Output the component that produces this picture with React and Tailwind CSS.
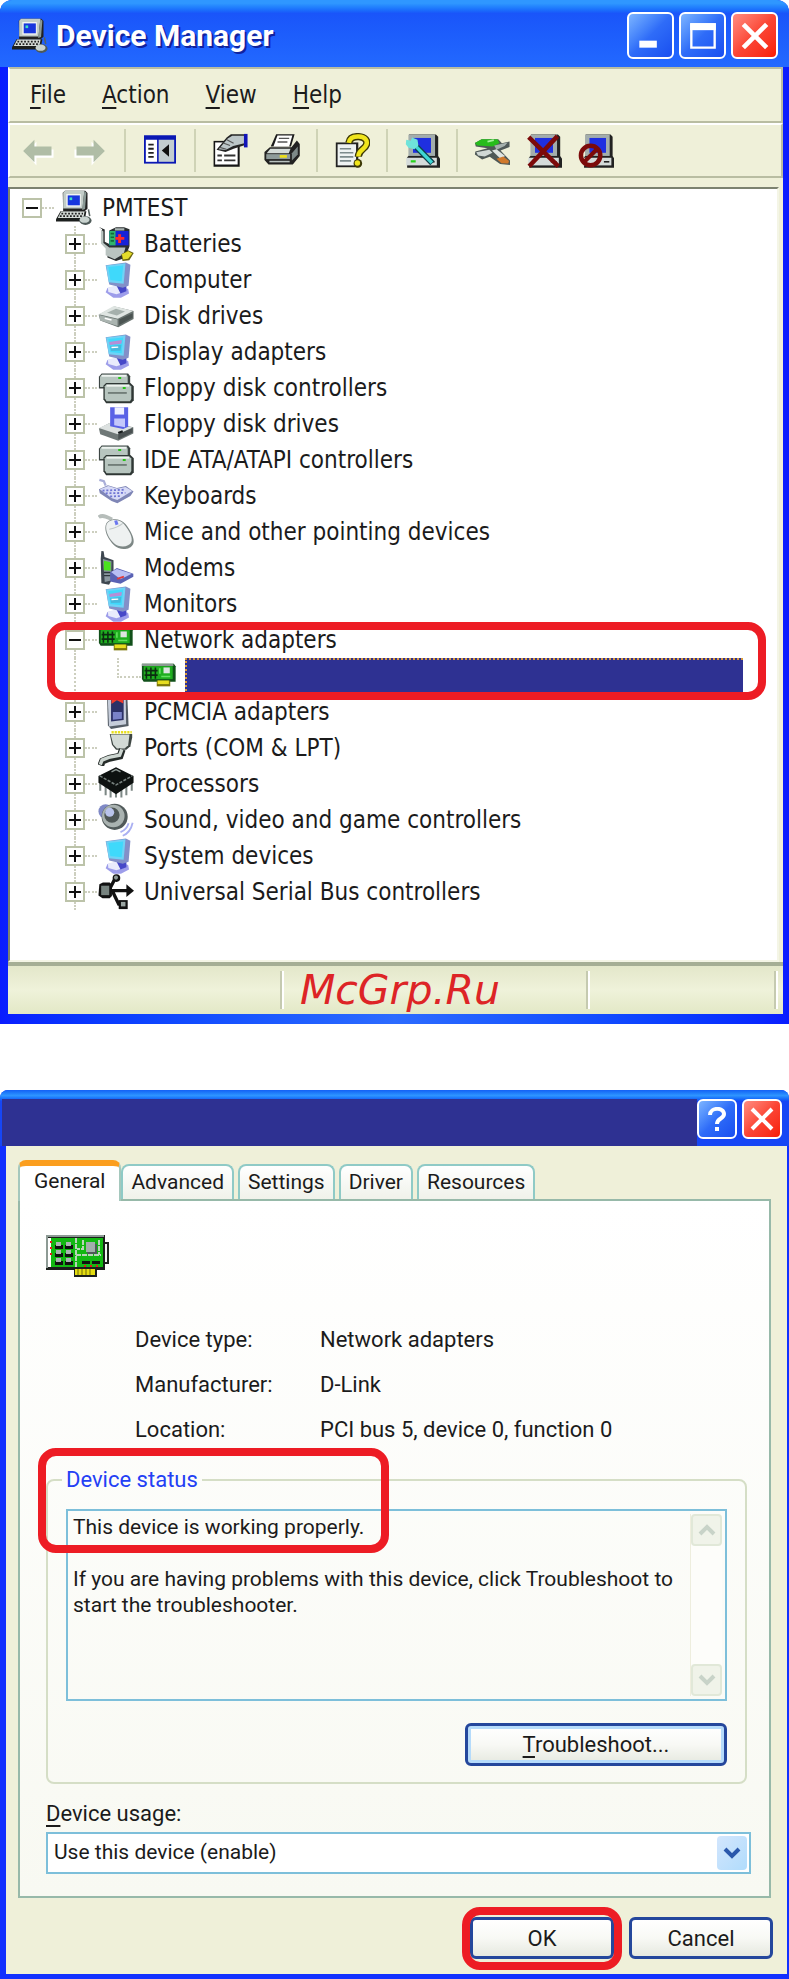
import React, { useState } from "react";

// Small drawings for the tree and the toolbar, all on a 16 x 16 grid
const Icon = ({ children, className = "h-9 w-9" }) => (
  <svg viewBox="0 0 16 16" className={`shrink-0 ${className}`} aria-hidden="true">
    {children}
  </svg>
);

const PcIcon = ({ className }) => (
  <Icon className={className}>
    <path d="M4 .3h9l1 1v7l-1.4 1.2H3.2L3 1.2z" fill="#222" />
    <path d="M4 .3h8.6l-.8 7.9H3.2V1.2z" fill="#c3cdc8" />
    <path d="M12.6.4l.9.8-.6 7.2-1.3.5z" fill="#8b9a96" />
    <path d="M4.6 1.8h6.4v5.6H4.6z" fill="#f4f6f4" />
    <path d="M5.2 2.4h5.4v4.4H5.2z" fill="#1836dd" />
    <path d="M6 3.3h1.2v1.2H6z" fill="#3fe0c0" />
    <path d="M2 9.4h11.5l-.8 4.6H0v-1z" fill="#1c1f1e" />
    <path d="M2.3 9.6h10.4l-.5 2.8H.8z" fill="#d6dcd8" />
    <path d="M2.4 10.5h9.6M1.7 11.6h9.9" stroke="#222" strokeWidth=".8" strokeDasharray=".8 .7" />
    <ellipse cx="13.1" cy="13.6" rx="2.7" ry="1.9" fill="#4e5a58" />
    <ellipse cx="12.7" cy="13.2" rx="2.2" ry="1.4" fill="#c9d3cf" />
    <path d="M14.4 8.6l.6 3" stroke="#56625f" strokeWidth=".7" />
  </Icon>
);

const BatteryIcon = () => (
  <Icon>
    <path d="M.4.4l1.4 1v6l2.4 2V14L8 15.5l4-1.3L14 9V1.4L11.6.6H8L5 2v6L3 7V1.6z" fill="#2b2f30" />
    <path d="M.5 1l.8.8v6L3.4 10v3l4 1.8 4-2.4.8-2.9H5L2.4 7.6V2.4z" fill="#b9c3c0" />
    <path d="M5 2.2h8.6v6.4H5z" fill="#1722d8" />
    <path d="M5 2.2h2.8v6.4H5z" fill="#2fb46a" />
    <path d="M5.6 3.4h1.5M5.6 5h1.5M5.6 6.6h1.5" stroke="#136b3a" strokeWidth=".7" />
    <path d="M9.6 3.7v3.8M7.7 5.5h4" stroke="#ff2a2a" strokeWidth="1.3" />
    <path d="M7.5 1h4.2v1H7.5z" fill="#aab4b2" />
    <path d="M10.4 12.6l3-1.8 2.5 1.2-2 3.2-3 .3z" fill="#6a6410" />
    <path d="M10.6 12.6l2.8-1.4 1.8 1-1.8 2.4-2.2.3z" fill="#e4dc2a" />
  </Icon>
);

const MonitorIcon = ({ display }) => (
  <Icon>
    <path d="M4.2 11.6l5.2-1 4 1.4.4 2-3.6 1.9H6.8L3.4 13.4z" fill="#9d9dea" />
    <path d="M4.4 11.4l3.4-1 3.8.9-.4 2-3 1-3.6-1z" fill="#e9ebfc" />
    <path d="M8 10h4.6v3L10 14z" fill="#4648c8" />
    <path d="M3.4 1.4l9-1.2 2 1-.8 9.4-2.6.8-6-1.4z" fill="#8390c8" />
    <path d="M3.6 1.5l8.6-1-.8 9.2-6.6-.7z" fill="#6fd3f6" />
    <path d="M4.6 2.2l6.6-.7-.7 7-5-.5z" fill="#3fd9fb" />
    {display && (
      <>
        <path d="M5 3.5l5.6-.8-.2 1.6-5.2.6z" fill="#b68ed6" />
        <path d="M5.4 5.4l5-.6-.4 2.6-4.2.2z" fill="#49b7dc" />
        <path d="M6 6l3-.2" stroke="#fff" strokeWidth=".6" />
      </>
    )}
  </Icon>
);

const DiskIcon = () => (
  <Icon>
    <path d="M.3 7.4l7-3.6 8.5 2v3.5L9 13 1 10z" fill="#68726f" />
    <path d="M.3 7.2L7 3.6l8.6 2.2-6.8 3.4z" fill="#dfe5e2" />
    <path d="M4 6.6l4-1.8 4 1.2-3.6 1.8z" fill="#a5b0ac" />
    <path d="M.5 7.6l8.2 2v2.8L1 10z" fill="#aab4b0" />
    <path d="M9.4 9.6l6-2.8v2L9.4 12z" fill="#4b5452" />
    <path d="M3 9l3 .8" stroke="#fff" strokeWidth=".7" />
  </Icon>
);

const ControllerIcon = () => (
  <Icon>
    <path d="M1.6 1.6h11.8l.9 1.2v5.4H.4V3z" fill="#3d4644" />
    <path d="M1.8 2h11l.4 1v4.6H.9V3z" fill="#b7c5bf" />
    <path d="M1.6 2.6h11" stroke="#eef3f0" strokeWidth=".8" />
    <path d="M3.6 5.8h10.8l1.5 1.4v6.2l-1.2 1.4H3.6L2.4 13V7z" fill="#2f3735" />
    <path d="M3.8 6.3h10l1 1v5.6l-.6 1H3.8L3 12.6V7.2z" fill="#b7c5bf" />
    <path d="M3.8 7h10" stroke="#eef3f0" strokeWidth=".8" />
    <path d="M4.4 10.2h8.4" stroke="#56625e" strokeWidth=".6" />
    <path d="M9 3.6h1.3M11 8h1.3" stroke="#25c316" strokeWidth=".9" />
  </Icon>
);

const FloppyIcon = () => (
  <Icon>
    <path d="M.4 10l5-2.6 10.3 2v2.8L9 15.4 1 12.6z" fill="#6f7877" />
    <path d="M.4 9.8l5-2.4 10 2.2-6.6 3z" fill="#dce1e0" />
    <path d="M9 12.6l6.4-2.8v2L9 14.9z" fill="#4a5152" />
    <path d="M5.4.6h8v8.6l-2.2 1L5.4 9z" fill="#5a62e6" />
    <path d="M7.4.6h4.2v3.2H7.4z" fill="#eef0ff" />
    <path d="M7.2 5.6H12v3.8l-4.8-.8z" fill="#c4c8fb" />
    <path d="M9 12l2-.8" stroke="#14191a" strokeWidth="1" />
  </Icon>
);

const KeyboardIcon = () => (
  <Icon>
    <path d="M.6.8l2 .6.8 2" stroke="#a9aed8" strokeWidth="1" fill="none" />
    <path d="M.4 5l4-1.8 4 1.2 4-.8 3.4 2.4-1.4 2-5.8 3.2L6 10.2.8 6.8z" fill="#7f86b6" />
    <path d="M.8 5l3.8-1.4 4 1.2 3.6-.8 3 1.8-6.6 4L6.2 9z" fill="#d7daf6" />
    <path d="M2 5.6l10-.4M3.4 6.8l8.8-.2M5.4 8.2l4.8-.2" stroke="#7076d4" strokeWidth=".8" strokeDasharray=".9 .8" />
  </Icon>
);

const MouseIcon = () => (
  <Icon>
    <path d="M.3 1.4c2-1.4 4 .2 6 1" stroke="#b6bdba" strokeWidth="1.6" fill="none" />
    <path d="M3.4 5C4 1.800 9.600 1.200 12.200 4.400c2.400 3 4.400 6.600 3.400 9-1.200 2.600-6 3-8.600.4C4.400 11 2.800 8 3.400 5z" fill="#7d8785" />
    <path d="M3.700 5C4.400 2.400 9.200 1.700 11.600 4.600c2.400 2.900 4 6 3.200 8-1 2.200-5.400 2.600-7.700.4C4.800 10.800 3.200 7.600 3.700 5z" fill="#eef1f1" />
    <path d="M5 6.800c2-.4 4.400-1.200 6-2.600" stroke="#c1c8c8" strokeWidth=".5" fill="none" />
    <path d="M7.200 3l1.300-.2.600 1.800-1.300.4z" fill="#6b77ef" />
  </Icon>
);

const ModemIcon = () => (
  <Icon>
    <path d="M1.500.4l1 .2.400 2.500 4 1.400V12l-2 3.400-3.400-.6L1.200 4z" fill="#3e4750" />
    <path d="M2.200 4l3.800 1-.2 8.600-2.800.6z" fill="#8b98a0" />
    <path d="M2.600 4.800l3 .6v3.800l-3-.2z" fill="#4be31e" />
    <path d="M2.600 10h3M2.600 11.400h3" stroke="#2e363c" strokeWidth=".6" />
    <path d="M5.400 10l3-2 7.300 2.600v1.300L10 15l-4.600-1z" fill="#5a62b4" />
    <path d="M5.800 9.800L8.400 8.400l6.600 2.200-5 2.400z" fill="#b9bff4" />
    <path d="M8.500 12.800l3-1" stroke="#e23b3b" strokeWidth=".8" />
  </Icon>
);

const NicIcon = () => (
  <Icon>
    <path d="M.4 2.500h14.200l.8 1.200v6.800H1.200L.4 9.300z" fill="#11501a" />
    <path d="M.4 2.500h14v1H.4z" fill="#8b9a93" />
    <path d="M1.200 3.600h12.900v5.800H1.200z" fill="#1fae1f" />
    <path d="M2.400 4.200v5M4.400 4.200v5M6.400 4.200v5M1.600 5.600h5.800M1.600 7.600h5.800" stroke="#0b2d10" strokeWidth=".7" />
    <path d="M10 4.200h2.800v2.600H10z" fill="#dde4e0" />
    <path d="M8.400 4.600v2.400M9 8.200h4" stroke="#64e060" strokeWidth=".7" />
    <path d="M7 10h6v2.600H7z" fill="#7d7708" />
    <path d="M7.400 10h5v1.600h-5z" fill="#e7dd1f" />
  </Icon>
);

const PcmciaIcon = () => (
  <Icon>
    <path d="M4 .6l9-.4.600 14-7.800 1.400L4.400 14z" fill="#555d66" />
    <path d="M4.300 1l8-.4.200 12.800-7.600 1z" fill="#c6cdda" />
    <path d="M5.800 2.400h5.600v9.200l-5.600.6z" fill="#2c3166" />
    <path d="M6 2.200h5.200v2L8.400 2.800 6 4.400z" fill="#f23a2a" />
    <path d="M6.600 8h4v3l-4 .4z" fill="#7a83c8" />
  </Icon>
);

const PortIcon = () => (
  <Icon>
    <path d="M6 1h9" stroke="#e8df20" strokeWidth="1.200" strokeDasharray="1 .4" />
    <path d="M5.200 1.800h10v1.400l-.8 4-1.800 1.600H8L6.200 6.600z" fill="#3f4744" />
    <path d="M5.600 2h8.400l-.6 4.800-1.600 1.400H8.400L6.800 6.400z" fill="#d3dad6" />
    <path d="M10.800 8.600l-1 3-4.800 1-3 1.200-.8 2" stroke="#252b29" strokeWidth="3" fill="none" />
    <path d="M10.600 8.600l-1 2.600-4.800 1-3 1.200-.8 2" stroke="#cdd6d1" strokeWidth="1.500" fill="none" />
  </Icon>
);

const CpuIcon = () => (
  <Icon>
    <path d="M1 6v5M3.400 8v5M5.600 9v5M8 10v4M10.400 9v5M12.600 8v5M15 6v5" stroke="#7d8885" strokeWidth=".9" />
    <path d="M.2 4.400L8 .6l7.800 3.800v3L8 12.600.2 7.400z" fill="#0d1110" />
    <path d="M.8 4.400l7.200 4 7.200-4" stroke="#77817e" strokeWidth=".7" fill="none" strokeDasharray="1.400 .6" />
    <path d="M6 2.600l2-1 2 1" stroke="#8d9794" strokeWidth=".6" fill="none" />
  </Icon>
);

const SoundIcon = () => (
  <Icon>
    <circle cx="3.400" cy="4.200" r="3.200" fill="#7f89c6" />
    <circle cx="7.400" cy="6.600" r="5.800" fill="#515a5a" />
    <circle cx="6.800" cy="6.200" r="5" fill="#a9b2b0" />
    <circle cx="6.200" cy="5.800" r="3.400" fill="#4e5655" />
    <circle cx="5.200" cy="4.600" r="2" fill="#b9c3ea" />
    <path d="M10 13.400c2-.8 3-2 3.600-4M11 15c2.400-1 3.800-3 4.400-5.800" stroke="#aab0f2" strokeWidth=".8" fill="none" />
  </Icon>
);

const UsbIcon = () => (
  <Icon>
    <path d="M4 7.400h9M5 7l2.600-5M6.600 8l2.600 5.400h2" stroke="#111" strokeWidth="1.500" fill="none" />
    <path d="M12.600 4.600L16 7.400l-3.400 2.800z" fill="#111" />
    <path d="M.6 4.600l1.600-.8h3l1 1v5l-1 1H2L.2 9.600z" fill="#111" />
    <path d="M1.400 5.200h3.600v4.200H1.400z" fill="#77837f" />
    <circle cx="8.200" cy="1.800" r="1.700" fill="#111" />
    <circle cx="8" cy="1.600" r=".9" fill="#8d9996" />
    <path d="M9.200 11.600h4v4h-4z" fill="#111" />
    <path d="M10.200 12.400h2v2h-2z" fill="#9aa5a2" />
  </Icon>
);

const ArrowIcon = ({ forward }) => (
  <Icon>
    <g transform={forward ? "translate(16 0) scale(-1 1)" : undefined}>
      <path d="M2.300 8.700L7.300 3.900v3.400h7.600v3.700H7.300v3.400z" fill="#fff" />
      <path d="M1.400 8l5-5v3h7.600v4H6.400v3z" fill="#b0bda6" />
    </g>
  </Icon>
);

const PaneIcon = () => (
  <Icon>
    <path d="M.900 1h14.200v12.600H.9z" fill="#0a18b4" />
    <path d="M1.700 3h5v9.800h-5z" fill="#fff" />
    <path d="M7.400 3h6.900v9.800H7.400z" fill="#c3cdd0" />
    <path d="M2.800 5.200h2.400M2.800 7h2.400M2.800 8.800h2.400M2.800 10.600h2.400" stroke="#222" strokeWidth=".8" />
    <path d="M12 5v5.600L8.800 7.800z" fill="#111" />
  </Icon>
);

const PropertiesIcon = () => (
  <Icon>
    <path d="M.7 3.500h11.600V15H.7z" fill="#151515" />
    <path d="M1.400 4.200h10V14h-10z" fill="#fff" />
    <path d="M2.400 10h2M5.400 10h5M2.400 12.200h2M5.400 12.200h5" stroke="#333" strokeWidth=".8" />
    <path d="M2 7.400L6.500 2 8.400.600h6v4.800L9.600 7 6 8.400z" fill="#252525" />
    <path d="M3 7.200L7 2.400l2-1.200h5.400v3.400l-5 1.200L6 7.600z" fill="#bcc6c8" />
    <path d="M3.400 6.400l3 .8M5 4.400l3 1.200M6.600 3l3 1.600" stroke="#555" strokeWidth=".5" />
    <path d="M14.200.4h1.600v6h-1.600z" fill="#1114b8" />
  </Icon>
);

const PrinterIcon = () => (
  <Icon>
    <path d="M5.400.500h8.200L12 6H3z" fill="#1a1a1a" />
    <path d="M6 1.100h6.600L11.200 6H4.200z" fill="#fff" />
    <path d="M6.600 2.400h4.600M6 4h4.400" stroke="#555" strokeWidth=".6" />
    <path d="M2.600 6.300h9.600l2.400-3 1.300 1.600v5.300L12.800 14H2L.2 12V8.400z" fill="#222" />
    <path d="M2.800 7h9L11 9H1.200z" fill="#d4dcd8" />
    <path d="M1 9.400h10.600v2.200H1z" fill="#8e9b9a" />
    <path d="M12.400 9l2.600-3v3.600l-2.600 2.600z" fill="#7d8988" />
    <path d="M7 9.800h3.200v1.200H7z" fill="#ecdf1b" />
    <path d="M2.400 12.700h9" stroke="#b9c2c0" strokeWidth=".7" />
  </Icon>
);

const HelpIcon = () => (
  <Icon>
    <path d="M.8 4.200h10v11H.8z" fill="#222" />
    <path d="M1.600 5h8.200v9.400H1.600z" fill="#eef2f2" />
    <path d="M2.600 7h5M2.600 8.800h6M2.600 10.600h6M2.600 12.400h5" stroke="#7c8a8c" strokeWidth=".7" />
    <path d="M6.600 4.400C7 1.900 9 1.500 11 1.600c3 .2 4 1.800 3.400 3.600-.6 2-3.600 2.400-3.600 5.400" stroke="#3c3806" strokeWidth="3.200" fill="none" />
    <path d="M6.600 4.400C7 1.900 9 1.500 11 1.600c3 .2 4 1.800 3.400 3.600-.6 2-3.600 2.400-3.600 5.200" stroke="#f0e51c" strokeWidth="2" fill="none" />
    <circle cx="10.600" cy="13.500" r="1.900" fill="#3c3806" />
    <circle cx="10.400" cy="13.300" r="1.200" fill="#f0e51c" />
  </Icon>
);

// The grey computer that three of the toolbar buttons share
const BasePc = () => (
  <>
    <path d="M2.200.700h12l1 1v8.500l.8 1.200v4H1.400v-4.600l.8-.8z" fill="#222" />
    <path d="M2 .7h11.800v9.500H2z" fill="#a3adac" />
    <path d="M4 2.200h8v6.600H4z" fill="#1f2fe0" />
    <path d="M1 11h13.600v3.400H1z" fill="#d5dbda" />
    <path d="M11 12.800h2.600" stroke="#222" strokeWidth=".7" />
  </>
);

const ScanIcon = () => (
  <Icon>
    <BasePc />
    <path d="M4 4.600l8.600 8.800" stroke="#0c3f4c" strokeWidth="2.600" />
    <path d="M4 4.600l8.400 8.600" stroke="#3fd6d4" strokeWidth="1.500" />
    <path d="M1 3l2 .4L3.600 2l2.400 1 .4 2.600L4.600 7.200 2 6.600.8 5z" fill="#6fe3da" />
    <path d="M3 12.600h2.200" stroke="#27d31c" strokeWidth="1" />
  </Icon>
);

const UpdateIcon = () => (
  <Icon>
    <path d="M.4 4.400l3-1.600h7.400l1.600 1.800 3.400-.8v2.400l-4 1.600 4.200 4.400v2l-4.400-.4-4.600-3.200-3.400 1.200L.4 9.600l.2-1.400L6 6.800.8 6z" fill="#4f5957" />
    <path d="M.4 4.400l3-1.600h7l1 1.600-3 1.600-7-.4z" fill="#27bc1c" />
    <path d="M6 3.800l2.800-.6" stroke="#a5f29b" strokeWidth=".8" />
    <path d="M9 5.600l6-1.400-1.400 1.600L10 7.400z" fill="#a6b1ae" />
    <path d="M1 8.600l5.800-1.200 1.400 1.400-3.400 1.600-3-.4z" fill="#d0d8d5" />
    <path d="M8 7.800l2-.6 3.800 3-2 1.200z" fill="#dfe5e2" />
    <path d="M10 11.400l3-1 2.600 2-.4 1.200-3-.2z" fill="#d0792c" />
  </Icon>
);

const UninstallIcon = () => (
  <Icon>
    <BasePc />
    <path d="M1.200 1.800l13.200 13M14 1.400L1.400 14.800" stroke="#7c0a0a" strokeWidth="2" />
  </Icon>
);

const DisableIcon = () => (
  <Icon>
    <g transform="translate(1.400 0) scale(.92 1)">
      <BasePc />
    </g>
    <circle cx="5.600" cy="10" r="4.300" fill="none" stroke="#7c0a0a" strokeWidth="2" />
    <path d="M8.600 7l-6 6" stroke="#7c0a0a" strokeWidth="1.800" />
  </Icon>
);

const BigCard = () => (
  <svg viewBox="0 0 63 42" className="h-[42px] w-[63px]" aria-hidden="true">
    <path d="M0 0h59v7h4v22h-4v6h-8v7H28v-7H0z" fill="#1b1f1c" />
    <path d="M59 9h2v18h-2z" fill="#f3f5f3" />
    <path d="M0 0h58v2H2v31H0z" fill="#8d9a94" />
    <path d="M2 3h3v29H2z" fill="#fff" />
    <path d="M5 3h52v29H5z" fill="#12b812" />
    <path d="M5 6v2M5 12v2M5 18v2" stroke="#e01c1c" strokeWidth="2" />
    <path d="M30 3v29M30 20h25M37 5v9h-6M53 5v15" stroke="#b9d4b9" strokeWidth="2" strokeDasharray="5 1" fill="none" />
    <path d="M9 10h8v4H9zM19 10h8v4h-8zM9 18h8v4H9zM19 18h8v4h-8zM9 26h8v4H9zM19 26h8v4h-8zM36 26h8v3h-8zM46 26h8v3h-8z" fill="#101310" />
    <path d="M10 7h5v4h-5zM20 7h5v4h-5zM10 15h5v4h-5zM20 15h5v4h-5zM10 23h5v4h-5zM20 23h5v4h-5z" fill="#aab4b2" />
    <path d="M41 9h10v10H41z" fill="#4f5a58" />
    <path d="M40 7h9v10h-9z" fill="#a3aeac" />
    <path d="M38 31h2M44 31h2M50 31h2" stroke="#e01c1c" strokeWidth="2" />
    <path d="M29 34h20v6H29z" fill="#e3dc10" />
    <path d="M32 34v6M36 34v6M40 34v6M44 34v6" stroke="#6e6a08" strokeWidth="1" />
  </svg>
);

const devices = [
  { name: "Batteries", icon: <BatteryIcon /> },
  { name: "Computer", icon: <MonitorIcon /> },
  { name: "Disk drives", icon: <DiskIcon /> },
  { name: "Display adapters", icon: <MonitorIcon display /> },
  { name: "Floppy disk controllers", icon: <ControllerIcon /> },
  { name: "Floppy disk drives", icon: <FloppyIcon /> },
  { name: "IDE ATA/ATAPI controllers", icon: <ControllerIcon /> },
  { name: "Keyboards", icon: <KeyboardIcon /> },
  { name: "Mice and other pointing devices", icon: <MouseIcon /> },
  { name: "Modems", icon: <ModemIcon /> },
  { name: "Monitors", icon: <MonitorIcon display /> },
  { name: "Network adapters", icon: <NicIcon />, open: true },
  { name: "PCMCIA adapters", icon: <PcmciaIcon /> },
  { name: "Ports (COM & LPT)", icon: <PortIcon /> },
  { name: "Processors", icon: <CpuIcon /> },
  { name: "Sound, video and game controllers", icon: <SoundIcon /> },
  { name: "System devices", icon: <MonitorIcon /> },
  { name: "Universal Serial Bus controllers", icon: <UsbIcon /> },
];

const menus = ["File", "Action", "View", "Help"];

const tools = [
  [
    { label: "Back", icon: <ArrowIcon /> },
    { label: "Forward", icon: <ArrowIcon forward /> },
  ],
  [{ label: "Show console tree", icon: <PaneIcon /> }],
  [
    { label: "Properties", icon: <PropertiesIcon /> },
    { label: "Print", icon: <PrinterIcon /> },
  ],
  [{ label: "Help", icon: <HelpIcon /> }],
  [{ label: "Scan for hardware changes", icon: <ScanIcon /> }],
  [
    { label: "Update driver", icon: <UpdateIcon /> },
    { label: "Uninstall", icon: <UninstallIcon /> },
    { label: "Disable", icon: <DisableIcon /> },
  ],
];

const tabs = ["General", "Advanced", "Settings", "Driver", "Resources"];

const details = [
  ["Device type:", "Network adapters"],
  ["Manufacturer:", "D-Link"],
  ["Location:", "PCI bus 5, device 0, function 0"],
];

const CaptionButton = ({ label, red, small, children }) => (
  <button
    type="button"
    aria-label={label}
    className={`flex items-center justify-center rounded-md border-2 border-white bg-linear-to-br ${
      red ? "from-[#ff8a80] via-[#fb4534] to-[#f81c00]" : "from-[#7db4ff] via-[#2f6cf8] to-[#1a4ef0]"
    } ${small ? "h-10 w-10" : "h-[47px] w-[47px]"}`}
  >
    <svg viewBox="0 0 24 24" className={small ? "h-6 w-6" : "h-7 w-7"} fill="none" aria-hidden="true">
      {children}
    </svg>
  </button>
);

const CloseMark = () => <path d="M2 2l20 20M22 2L2 22" stroke="#fff" strokeWidth="4" />;

const Expander = ({ open, name }) => (
  <button
    type="button"
    aria-label={`${open ? "Collapse" : "Expand"} ${name}`}
    className="flex h-5 w-5 shrink-0 items-center justify-center border-2 border-[#bcc3a9] bg-white"
  >
    <svg viewBox="0 0 12 12" className="h-3 w-3" aria-hidden="true">
      <path d={open ? "M0 6h12" : "M0 6h12M6 0v12"} stroke="#111" strokeWidth="2" />
    </svg>
  </button>
);

const Dots = ({ className }) => <span className={`shrink-0 border-dotted border-[#cdcfbf] ${className}`} />;

const DeviceRow = ({ name, icon, open }) => (
  <div className="flex h-9 items-center">
    <div className="flex h-full w-5 flex-col items-center">
      <Dots className="h-2 border-l-2" />
      <Expander open={open} name={name} />
      <Dots className="h-2 border-l-2" />
    </div>
    <Dots className="mr-px w-3 border-t-2" />
    {icon}
    <span className="ml-[10px] whitespace-nowrap">{name}</span>
  </div>
);

const Underlined = ({ children }) => (
  <>
    <span className="underline decoration-2 underline-offset-4">{children[0]}</span>
    {children.slice(1)}
  </>
);

const DeviceManager = () => (
  <section
    aria-label="Device Manager"
    className="rounded-t-xl bg-[#1f3cff] bg-linear-to-r from-[#0a1cff] via-[#2c6bff] to-[#0a1cff] pr-[6px] pb-[10px] pl-2 font-['DejaVu_Sans_Condensed','DejaVu_Sans',sans-serif] text-[24px] text-[#1b1b1b]"
  >
    <header className="-mr-[6px] -ml-2 flex h-[67px] items-center rounded-t-xl bg-linear-to-b from-[#2f97ff] from-5% via-[#1a55fa] via-20% to-[#2369ff] pr-[11px] pl-3 pt-1">
      <PcIcon className="h-9 w-9" />
      <h1 className="ml-2 flex-1 font-['Roboto',sans-serif] text-[30px] font-bold whitespace-nowrap text-white [text-shadow:2px_2px_0_#10239e]">
        Device Manager
      </h1>
      <div className="flex gap-[5px]">
        <CaptionButton label="Minimize">
          <path d="M2 19h15" stroke="#fff" strokeWidth="6" />
        </CaptionButton>
        <CaptionButton label="Maximize">
          <path d="M2 2h20v20H2z" stroke="#fff" strokeWidth="2" />
          <path d="M1 4h22" stroke="#fff" strokeWidth="6" />
        </CaptionButton>
        <CaptionButton label="Close" red>
          <CloseMark />
        </CaptionButton>
      </div>
    </header>

    <div className="bg-[#eff0d9]">
      <nav className="flex h-14 items-center gap-9 border-2 border-t-[#b9bda2] border-r-[#b9bda2] border-b-[#b9bda2] border-l-white pl-5">
        {menus.map((menu) => (
          <button type="button" key={menu}>
            <Underlined>{menu}</Underlined>
          </button>
        ))}
      </nav>
      <div className="flex h-[55px] items-center gap-4 border-2 border-t-white border-r-[#b9bda2] border-b-[#b9bda2] border-l-white pl-[10px]">
        {tools.map((group, i) => (
          <React.Fragment key={i}>
            {i > 0 && <span className="h-[43px] w-[2px] bg-[#cfd3b6]" />}
            {group.map((tool) => (
              <button type="button" key={tool.label} aria-label={tool.label}>
                {tool.icon}
              </button>
            ))}
          </React.Fragment>
        ))}
      </div>

      <main className="mt-[9px] mr-1 border-2 border-t-[#7c8270] border-r-[#f4f5e6] border-b-[#f4f5e6] border-l-[#7c8270] bg-white pt-px pb-[50px]">
        <div className="flex h-9 items-center pl-3">
          <Expander open name="PMTEST" />
          <Dots className="mr-[2px] w-3 border-t-2" />
          <PcIcon />
          <span className="ml-[10px]">PMTEST</span>
        </div>
        <ul className="pl-[55px]">
          {devices.map((device) =>
            device.open ? (
              <li key={device.name} className="relative">
                <DeviceRow {...device} />
                <div className="flex h-9 pl-[9px]">
                  <Dots className="border-l-2" />
                  <Dots className="ml-[41px] h-5 w-6 border-b-2 border-l-2" />
                  <NicIcon />
                  <span className="mr-[34px] ml-2 flex-1 border-t-2 border-l-2 border-dotted border-[#d99a3c] bg-[#2e3192]" />
                </div>
                <span className="pointer-events-none absolute top-0 right-[11px] -bottom-[6px] -left-[18px] rounded-[18px] border-8 border-[#ed1c24]" />
              </li>
            ) : (
              <li key={device.name}>
                <DeviceRow {...device} />
              </li>
            )
          )}
        </ul>
      </main>

      <footer className="flex h-[52px] items-center border-t-4 border-[#a5ae95] bg-linear-to-b from-[#e3e7ca] via-[#eff2da] to-[#e3e8c6] pr-[5px]">
        <span className="flex-[277]" />
        <span className="h-[38px] w-1 border-r-2 border-l-2 border-l-[#c5cab0] border-r-white" />
        <span className="flex-[292] pl-4 font-['DejaVu_Sans',sans-serif] text-[41px] leading-none whitespace-nowrap text-[#dd2426] italic">
          McGrp.Ru
        </span>
        <span className="h-[38px] w-1 border-r-2 border-l-2 border-l-[#c5cab0] border-r-white" />
        <span className="flex-[187]" />
        <span className="h-[38px] w-1 border-r-2 border-l-2 border-l-[#c5cab0] border-r-white" />
      </footer>
    </div>
  </section>
);

const xpButton =
  "rounded-md border-[3px] border-[#24479c] bg-linear-to-b from-white via-[#f8f9f5] to-[#e6e9e0] text-center";

const Chevron = ({ down, color }) => (
  <svg viewBox="0 0 18 12" className="h-3 w-[18px]" fill="none" aria-hidden="true">
    <path d={down ? "M2 2l7 7 7-7" : "M2 10l7-7 7 7"} stroke={color} strokeWidth="4" />
  </svg>
);

const AdapterProperties = () => {
  const [usage, setUsage] = useState("enable");

  return (
    <section
      aria-label="Adapter properties"
      className="rounded-t-lg bg-[#1130ff] pr-[2px] pb-[7px] pl-[6px] font-['Roboto',sans-serif] text-[22px] text-[#1b1b1b]"
    >
      <header className="-mr-[2px] -ml-[6px] flex h-14 items-start rounded-t-lg bg-linear-to-b from-[#1560f5] via-[#2f95ff] via-10% to-[#1646f5] to-20% pt-[9px] pr-[7px] pl-[2px]">
        <div className="h-[47px] flex-1 bg-[#2e3192]" />
        <div className="flex gap-[5px]">
          <CaptionButton label="Help" small>
            <path d="M5 8c0-8 14-8 14-1 0 5-7 4-7 10" stroke="#fff" strokeWidth="4" />
            <path d="M10 20h4v4h-4z" fill="#fff" />
          </CaptionButton>
          <CaptionButton label="Close" red small>
            <CloseMark />
          </CaptionButton>
        </div>
      </header>

      <div className="bg-[#eff0d9] pt-[14px] pr-[14px] pb-[15px] pl-3">
        <div role="tablist" className="flex items-end text-[21px]">
          {tabs.map((tab, i) =>
            i === 0 ? (
              <button
                type="button"
                role="tab"
                aria-selected="true"
                key={tab}
                className="relative z-10 -mb-[2px] h-[41px] rounded-t-lg border-x-2 border-t-[6px] border-x-[#a5c8bd] border-t-[#fb9e1e] bg-white px-[14px] pb-1"
              >
                {tab}
              </button>
            ) : (
              <button
                type="button"
                role="tab"
                aria-selected="false"
                key={tab}
                className="mr-1 h-[35px] rounded-t-lg border-2 border-b-0 border-[#8fcac6] bg-linear-to-b from-white to-[#f0f2ea] px-2"
              >
                {tab}
              </button>
            )
          )}
        </div>

        <div className="mr-[2px] border-2 border-[#97b9a9] bg-linear-to-b from-white to-[#f8f9f2] pt-[34px] pr-[18px] pb-[22px] pl-[26px]">
          <BigCard />
          <dl className="mt-10 ml-[89px] grid grid-cols-[185px_1fr] leading-[45px]">
            {details.map(([term, value]) => (
              <React.Fragment key={term}>
                <dt>{term}</dt>
                <dd>{value}</dd>
              </React.Fragment>
            ))}
          </dl>

          <div className="relative mt-[13px] mr-1">
            <fieldset className="rounded-lg border-2 border-[#d5dec6] px-[18px] pb-4">
              <legend className="-ml-1 px-1 leading-[30px] text-[#2340f5]">Device status</legend>
              <div className="mt-[14px] flex border-2 border-[#7dbfda] p-[3px]">
                <textarea
                  readOnly
                  rows="4"
                  aria-label="Device status"
                  className="h-[182px] flex-1 resize-none overflow-hidden pl-[2px] text-[21px] leading-[26px] outline-none"
                  defaultValue={
                    "This device is working properly.\n\nIf you are having problems with this device, click Troubleshoot to start the troubleshooter."
                  }
                />
                <div className="flex w-8 flex-col justify-between border-l border-[#eeeede] bg-[#fdfdfa]">
                  <button type="button" aria-label="Scroll up" className="flex h-8 items-center justify-center rounded border-2 border-[#e1e8d8] bg-[#f0f3e9]">
                    <Chevron color="#c8d3c8" />
                  </button>
                  <button type="button" aria-label="Scroll down" className="flex h-8 items-center justify-center rounded border-2 border-[#e1e8d8] bg-[#f0f3e9]">
                    <Chevron down color="#c8d3c8" />
                  </button>
                </div>
              </div>
              <button type="button" className={`mt-[22px] ml-auto block h-[43px] w-[262px] shadow-[inset_0_0_0_3px_#b5dbfb] ${xpButton}`}>
                <Underlined>Troubleshoot...</Underlined>
              </button>
            </fieldset>
            <span className="pointer-events-none absolute -top-[17px] -left-2 h-[105px] w-[351px] rounded-[18px] border-8 border-[#ed1c24]" />
          </div>

          <label htmlFor="usage" className="mt-[15px] block leading-[30px]">
            <Underlined>Device usage:</Underlined>
          </label>
          <div className="relative mt-[3px] flex h-[42px] items-center">
            <select
              id="usage"
              value={usage}
              onChange={(e) => setUsage(e.target.value)}
              className="h-full w-full appearance-none border-2 border-[#7dbfda] bg-white pl-[6px] text-[21px]"
            >
              <option value="enable">Use this device (enable)</option>
              <option value="disable">Do not use this device (disable)</option>
            </select>
            <span className="pointer-events-none absolute right-1 flex h-[34px] w-[30px] items-center justify-center rounded bg-linear-to-br from-[#d3e6fd] to-[#b0dcfc]">
              <Chevron down color="#2a58ac" />
            </span>
          </div>
        </div>

        <div className="mt-[19px] flex justify-end gap-[15px]">
          <div className="relative">
            <button type="button" className={`h-[42px] w-36 ${xpButton}`}>
              OK
            </button>
            <span className="pointer-events-none absolute -inset-x-2 -top-[10px] -bottom-[11px] rounded-[18px] border-8 border-[#ed1c24]" />
          </div>
          <button type="button" className={`h-[42px] w-36 ${xpButton}`}>
            Cancel
          </button>
        </div>
      </div>
    </section>
  );
};

const App = () => (
  <div className="flex flex-col gap-[66px] bg-white">
    <DeviceManager />
    <AdapterProperties />
  </div>
);

export default App;
